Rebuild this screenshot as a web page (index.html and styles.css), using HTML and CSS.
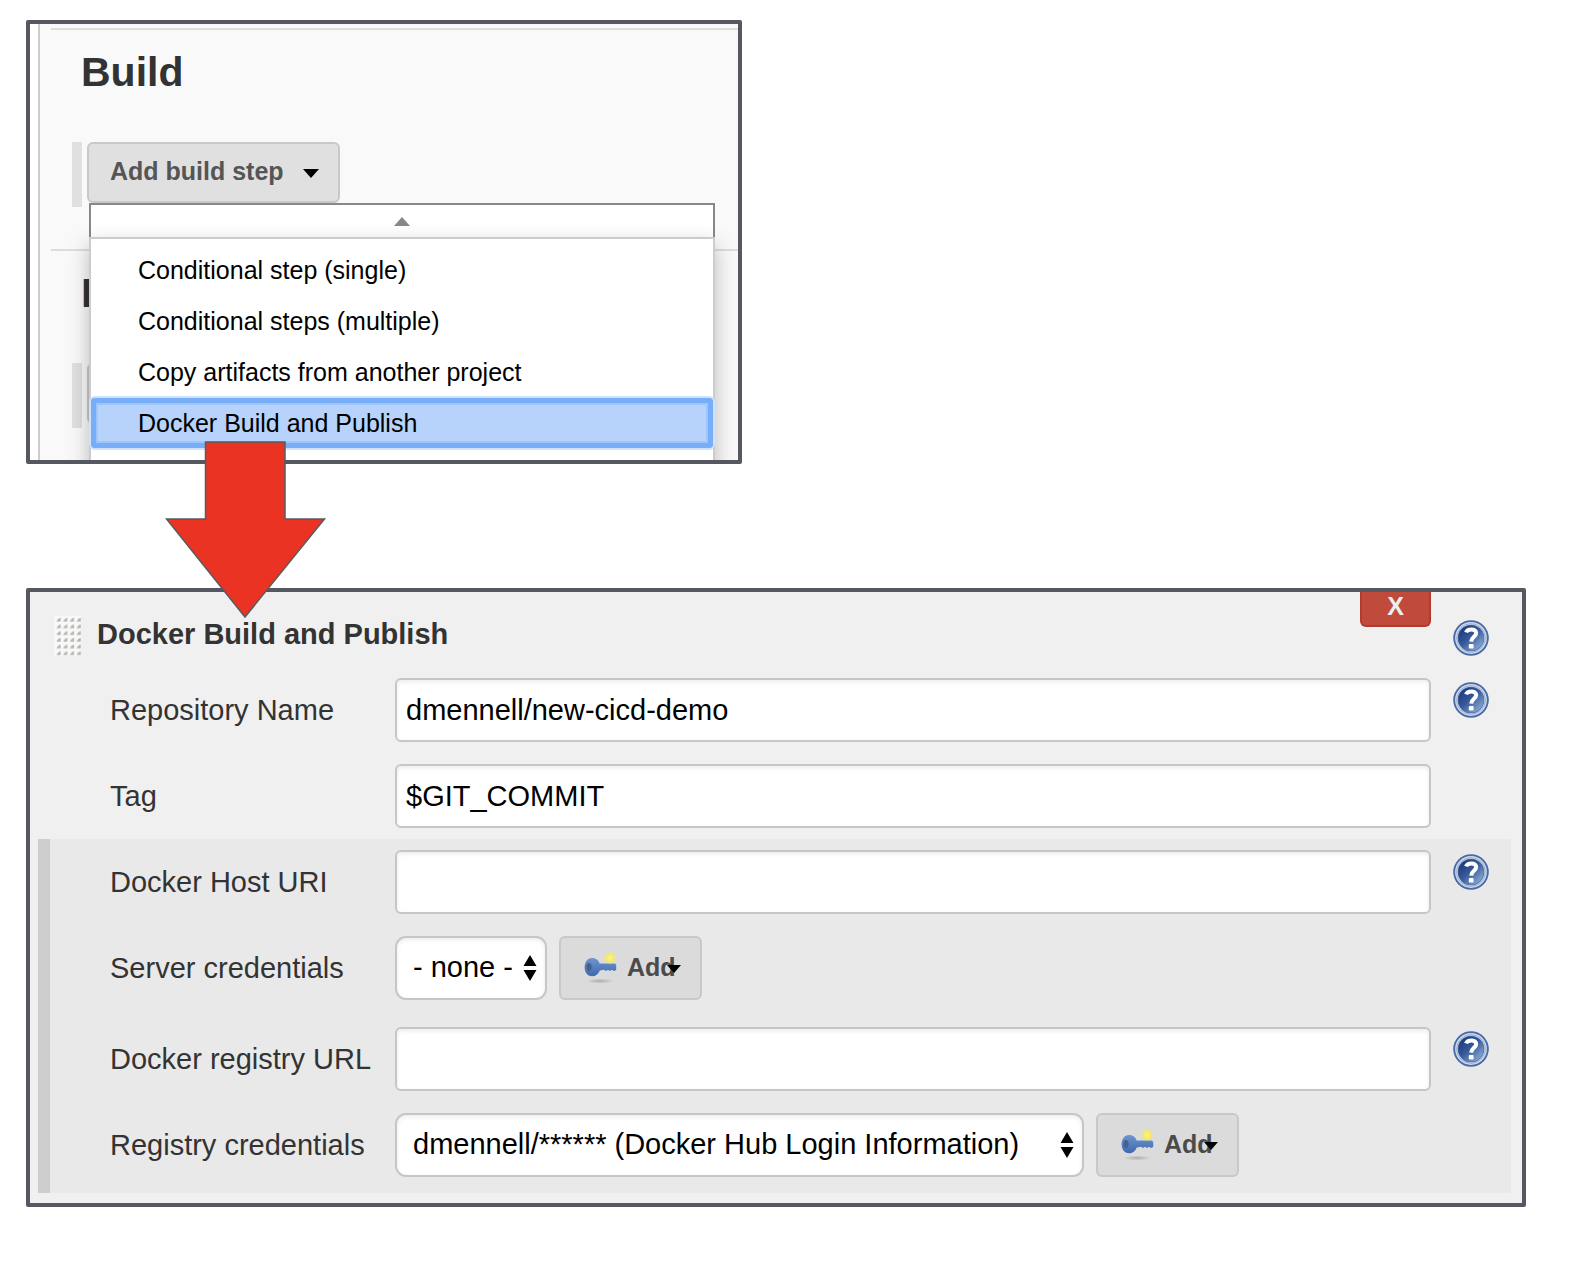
FILE: index.html
```html
<!DOCTYPE html>
<html lang="en">
<head>
<meta charset="utf-8">
<title>Docker Build and Publish</title>
<link rel="stylesheet" href="styles.css">
</head>
<body>
<svg class="defs" width="0" height="0" aria-hidden="true">
  <defs>
    <linearGradient id="disc" x1="0.1" y1="0.1" x2="0.9" y2="0.95">
      <stop offset="0" stop-color="#1c3a78"/>
      <stop offset="0.45" stop-color="#37599a"/>
      <stop offset="1" stop-color="#8fb0d8"/>
    </linearGradient>
    <radialGradient id="spark">
      <stop offset="0" stop-color="#fbf39a"/>
      <stop offset="0.6" stop-color="#f5ea5c"/>
      <stop offset="1" stop-color="#f1e77a" stop-opacity="0"/>
    </radialGradient>
    <radialGradient id="shade">
      <stop offset="0" stop-color="#999" stop-opacity="0.7"/>
      <stop offset="1" stop-color="#999" stop-opacity="0"/>
    </radialGradient>
    <linearGradient id="keyblue" x1="0" y1="0" x2="0" y2="1">
      <stop offset="0" stop-color="#6f95cf"/>
      <stop offset="1" stop-color="#3f69ad"/>
    </linearGradient>
    <pattern id="grip" x="2" y="1" width="6.7" height="6.7" patternUnits="userSpaceOnUse">
      <path d="M4.6 0.6V4.6H0.4C1.2 2.6 2.6 1.2 4.6 0.6Z" fill="#b4b4b0"/>
    </pattern>
    <symbol id="help" viewBox="0 0 36 36">
      <circle cx="18" cy="18" r="17.8" fill="#4a6aa5"/>
      <circle cx="18" cy="18" r="14.6" fill="none" stroke="#cfdaeb" stroke-width="2.6"/>
      <circle cx="18" cy="18" r="14.4" fill="none" stroke="#8ea6cc" stroke-width="0.8"/>
      <circle cx="18" cy="18" r="12.6" fill="url(#disc)"/>
      <path d="M13 12.4C14.4 8.6 23.2 8.2 23.2 13C23.2 16.8 18.4 16.8 18.2 21.6" fill="none" stroke="#fff" stroke-width="4"/>
      <rect x="15.8" y="24" width="4.8" height="4.6" rx="1" fill="#fff"/>
    </symbol>
    <symbol id="key" viewBox="0 0 34 32">
      <ellipse cx="16" cy="29" rx="14" ry="2.6" fill="url(#shade)"/>
      <path d="M8 6C12 6 14.6 8.4 15.6 11.4H31L32.2 13V18L30 19L28 17.8L26 19L24 17.8L22 19L20 17.8L15.8 18.4C14.4 22 11.6 24.2 8 24.2C3.4 24.2 0.6 20.4 0.6 15.6C0.6 10 3.4 6 8 6Z" fill="url(#keyblue)"/>
      <ellipse cx="5" cy="15" rx="2.6" ry="4" fill="#44618f"/>
      <circle cx="26" cy="6" r="6.4" fill="url(#spark)"/>
    </symbol>
    <symbol id="updown" viewBox="0 0 14 26">
      <path d="M7 0L13.5 11H0.5ZM7 26L0.5 15H13.5Z" fill="#000"/>
    </symbol>
    <symbol id="caret" viewBox="0 0 16 9">
      <path d="M0 0H16L8 9Z" fill="#000"/>
    </symbol>
  </defs>
</svg>

<main class="page">
  <section class="panel build">
    <div class="sheet">
      <section class="block">
        <h2>Build</h2>
        <div class="step-row">
          <span class="rail"></span>
          <button class="btn step-btn" type="button">Add build step
            <svg class="caret" width="16" height="9"><use href="#caret"/></svg>
          </button>
          <div class="menu">
            <div class="scroll-up"><svg width="16" height="9" viewBox="0 0 16 9"><path d="M0 9H16L8 0Z" fill="#878787"/></svg></div>
            <ul>
              <li><a href="#">Conditional step (single)</a></li>
              <li><a href="#">Conditional steps (multiple)</a></li>
              <li><a href="#">Copy artifacts from another project</a></li>
              <li><a href="#" class="active">Docker Build and Publish</a></li>
            </ul>
          </div>
        </div>
      </section>
      <section class="block">
        <h2>I</h2>
        <div class="step-row">
          <span class="rail"></span>
          <span class="btn stub"></span>
        </div>
      </section>
    </div>
  </section>

  <svg class="arrow" width="162" height="178" viewBox="0 0 162 178" aria-hidden="true">
    <path d="M40.5 1H120V78H159.5L80 176L1.5 78H40.5Z" fill="#ea3323" stroke="#595b60" stroke-width="1.5"/>
  </svg>

  <form class="panel step">
    <header>
      <svg class="handle" width="27" height="40"><rect width="27" height="40" fill="#f8f8f8"/><rect x="2" y="1" width="25" height="39" fill="url(#grip)"/></svg>
      <h3>Docker Build and Publish</h3>
      <button class="delete" type="button">X</button>
      <a class="help" href="#" aria-label="Help"><svg width="36" height="36"><use href="#help"/></svg></a>
    </header>
    <div class="row">
      <label for="repo">Repository Name</label>
      <div class="field"><input id="repo" type="text" value="dmennell/new-cicd-demo"></div>
      <a class="help" href="#" aria-label="Help"><svg width="36" height="36"><use href="#help"/></svg></a>
    </div>
    <div class="row">
      <label for="tag">Tag</label>
      <div class="field"><input id="tag" type="text" value="$GIT_COMMIT"></div>
      <span class="help"></span>
    </div>
    <div class="advanced">
      <div class="row">
        <label for="host">Docker Host URI</label>
        <div class="field"><input id="host" type="text"></div>
        <a class="help" href="#" aria-label="Help"><svg width="36" height="36"><use href="#help"/></svg></a>
      </div>
      <div class="row credentials">
        <label for="server">Server credentials</label>
        <div class="field">
          <div class="picker">
            <select id="server"><option>- none -</option></select>
            <svg width="14" height="26"><use href="#updown"/></svg>
          </div>
          <button class="btn add" type="button"><svg width="34" height="32"><use href="#key"/></svg>Add<svg class="mark" width="14" height="8" viewBox="0 0 16 9"><use href="#caret"/></svg></button>
        </div>
        <span class="help"></span>
      </div>
      <div class="row">
        <label for="registry">Docker registry URL</label>
        <div class="field"><input id="registry" type="text"></div>
        <a class="help" href="#" aria-label="Help"><svg width="36" height="36"><use href="#help"/></svg></a>
      </div>
      <div class="row credentials">
        <label for="login">Registry credentials</label>
        <div class="field">
          <div class="picker wide">
            <select id="login"><option>dmennell/****** (Docker Hub Login Information)</option></select>
            <svg width="14" height="26"><use href="#updown"/></svg>
          </div>
          <button class="btn add" type="button"><svg width="34" height="32"><use href="#key"/></svg>Add<svg class="mark" width="14" height="8" viewBox="0 0 16 9"><use href="#caret"/></svg></button>
        </div>
        <span class="help"></span>
      </div>
    </div>
  </form>
</main>
</body>
</html>
```
FILE: styles.css
```css
* { box-sizing: border-box; }

body {
  margin: 0;
  background: #fff;
  color: #333;
  font-family: "Liberation Sans", Arial, sans-serif;
  font-size: 29px;
}

svg { display: block; flex: none; }
.defs { position: absolute; }

h2, h3, ul { margin: 0; padding: 0; }

.page {
  position: relative;
  display: flex;
  flex-direction: column;
  gap: 124px;
  padding: 20px 48px 78px 26px;
}

.panel {
  border: 4px solid #555860;
  border-radius: 2px;
}

/* Build section with the open step menu */
.build {
  width: 100%;
  max-width: 716px;
  padding-left: 8px;
  overflow: hidden;
}

.sheet {
  padding: 4px 0 0 11px;
  border-left: 2px solid #ccc;
  background: #f9f9f9;
}

.block {
  padding: 18px 0 42px 21px;
  border-top: 2px solid #ddd;
}

.block:last-child { padding-bottom: 32px; }

.block h2 {
  margin: 0 0 46px 9px;
  font-size: 41px;
  line-height: 48px;
}

.step-row {
  position: relative;
  display: flex;
  align-items: flex-start;
  gap: 5px;
}

.rail {
  width: 10px;
  height: 65px;
  background: #e0e0e0;
}

.btn {
  display: flex;
  align-items: center;
  border: 2px solid #c8c8c8;
  border-radius: 6px;
  background: #e0e0e0;
  color: #555;
  font: bold 25px "Liberation Sans", Arial, sans-serif;
}

.step-btn {
  gap: 19px;
  height: 61px;
  padding: 0 19px 2px 21px;
}

.caret { margin-top: 3px; }

.stub {
  width: 253px;
  height: 61px;
}

.menu {
  position: absolute;
  z-index: 1;
  top: 61px;
  left: 17px;
  right: 23px;
}

.scroll-up {
  display: flex;
  justify-content: center;
  height: 34px;
  padding-top: 12px;
  border: 2px solid #888;
  border-bottom: 0;
  background: #fff;
}

.menu ul {
  display: flex;
  flex-direction: column;
  gap: 1px;
  padding: 6px 0 64px;
  border: 2px solid #ccc;
  background: #fff;
  box-shadow: 0 8px 20px rgba(0, 0, 0, 0.25);
  list-style: none;
}

.menu a {
  display: block;
  padding-left: 47px;
  color: #000;
  font-size: 25px;
  line-height: 50px;
  text-decoration: none;
}

.menu .active {
  border-radius: 4px;
  background: #b7d3fb;
  box-shadow: inset 0 0 0 5px #78adf8, inset 0 0 0 7px #a0c5fa, 0 0 0 2px #cfe2fd;
}

.arrow {
  position: absolute;
  z-index: 2;
  top: 441px;
  left: 165px;
}

/* Step configuration */
.step {
  padding-bottom: 10px;
  background: #f0f0f0;
}

.step header {
  display: flex;
  align-items: flex-start;
  height: 75px;
  padding: 0 33px 0 24px;
}

.handle { margin-top: 24px; }

.step h3 {
  flex: 1;
  margin: 22px 0 0 16px;
  font-size: 29px;
  line-height: 40px;
}

.delete {
  width: 71px;
  height: 35px;
  padding: 0 0 10px;
  border: 2px solid #b13b2e;
  border-top: 0;
  border-radius: 0 0 6px 6px;
  background: #c04b3c;
  color: #eee;
  font: bold 25px "Liberation Sans", Arial, sans-serif;
}

.help {
  flex: none;
  width: 36px;
  margin: 4px 0 0 22px;
}

header .help { margin-top: 28px; }

.row {
  display: flex;
  align-items: flex-start;
  padding: 11px 33px 11px 80px;
}

.row label {
  flex: none;
  width: 285px;
  line-height: 64px;
}

.field {
  display: flex;
  flex: 1;
  gap: 12px;
}

input, select {
  width: 100%;
  height: 64px;
  margin: 0;
  border: 2px solid #c6c6c6;
  background: #fff;
  box-shadow: inset 0 2px 4px rgba(0, 0, 0, 0.08);
  color: #000;
  font: 29px "Liberation Sans", Arial, sans-serif;
}

input {
  padding: 0 9px;
  border-radius: 6px;
}

select {
  padding: 0 32px 2px 16px;
  border-radius: 11px;
  appearance: none;
}

.advanced {
  margin: 0 11px 0 8px;
  border-left: 12px solid #cecece;
  background: #e9e9e9;
}

.advanced .row {
  padding-right: 22px;
  padding-left: 60px;
}

.advanced .credentials { padding-bottom: 16px; }

.picker {
  position: relative;
  flex: 0 1 152px;
}

.wide { flex-basis: 689px; }

.picker svg {
  position: absolute;
  top: 19px;
  right: 10px;
  pointer-events: none;
}

.add {
  position: relative;
  gap: 9px;
  width: 143px;
  height: 64px;
  padding: 0 0 1px 23px;
  background: #dbdbdb;
  color: #4b4b4b;
}

.mark {
  position: absolute;
  top: 27px;
  right: 19px;
}
```
